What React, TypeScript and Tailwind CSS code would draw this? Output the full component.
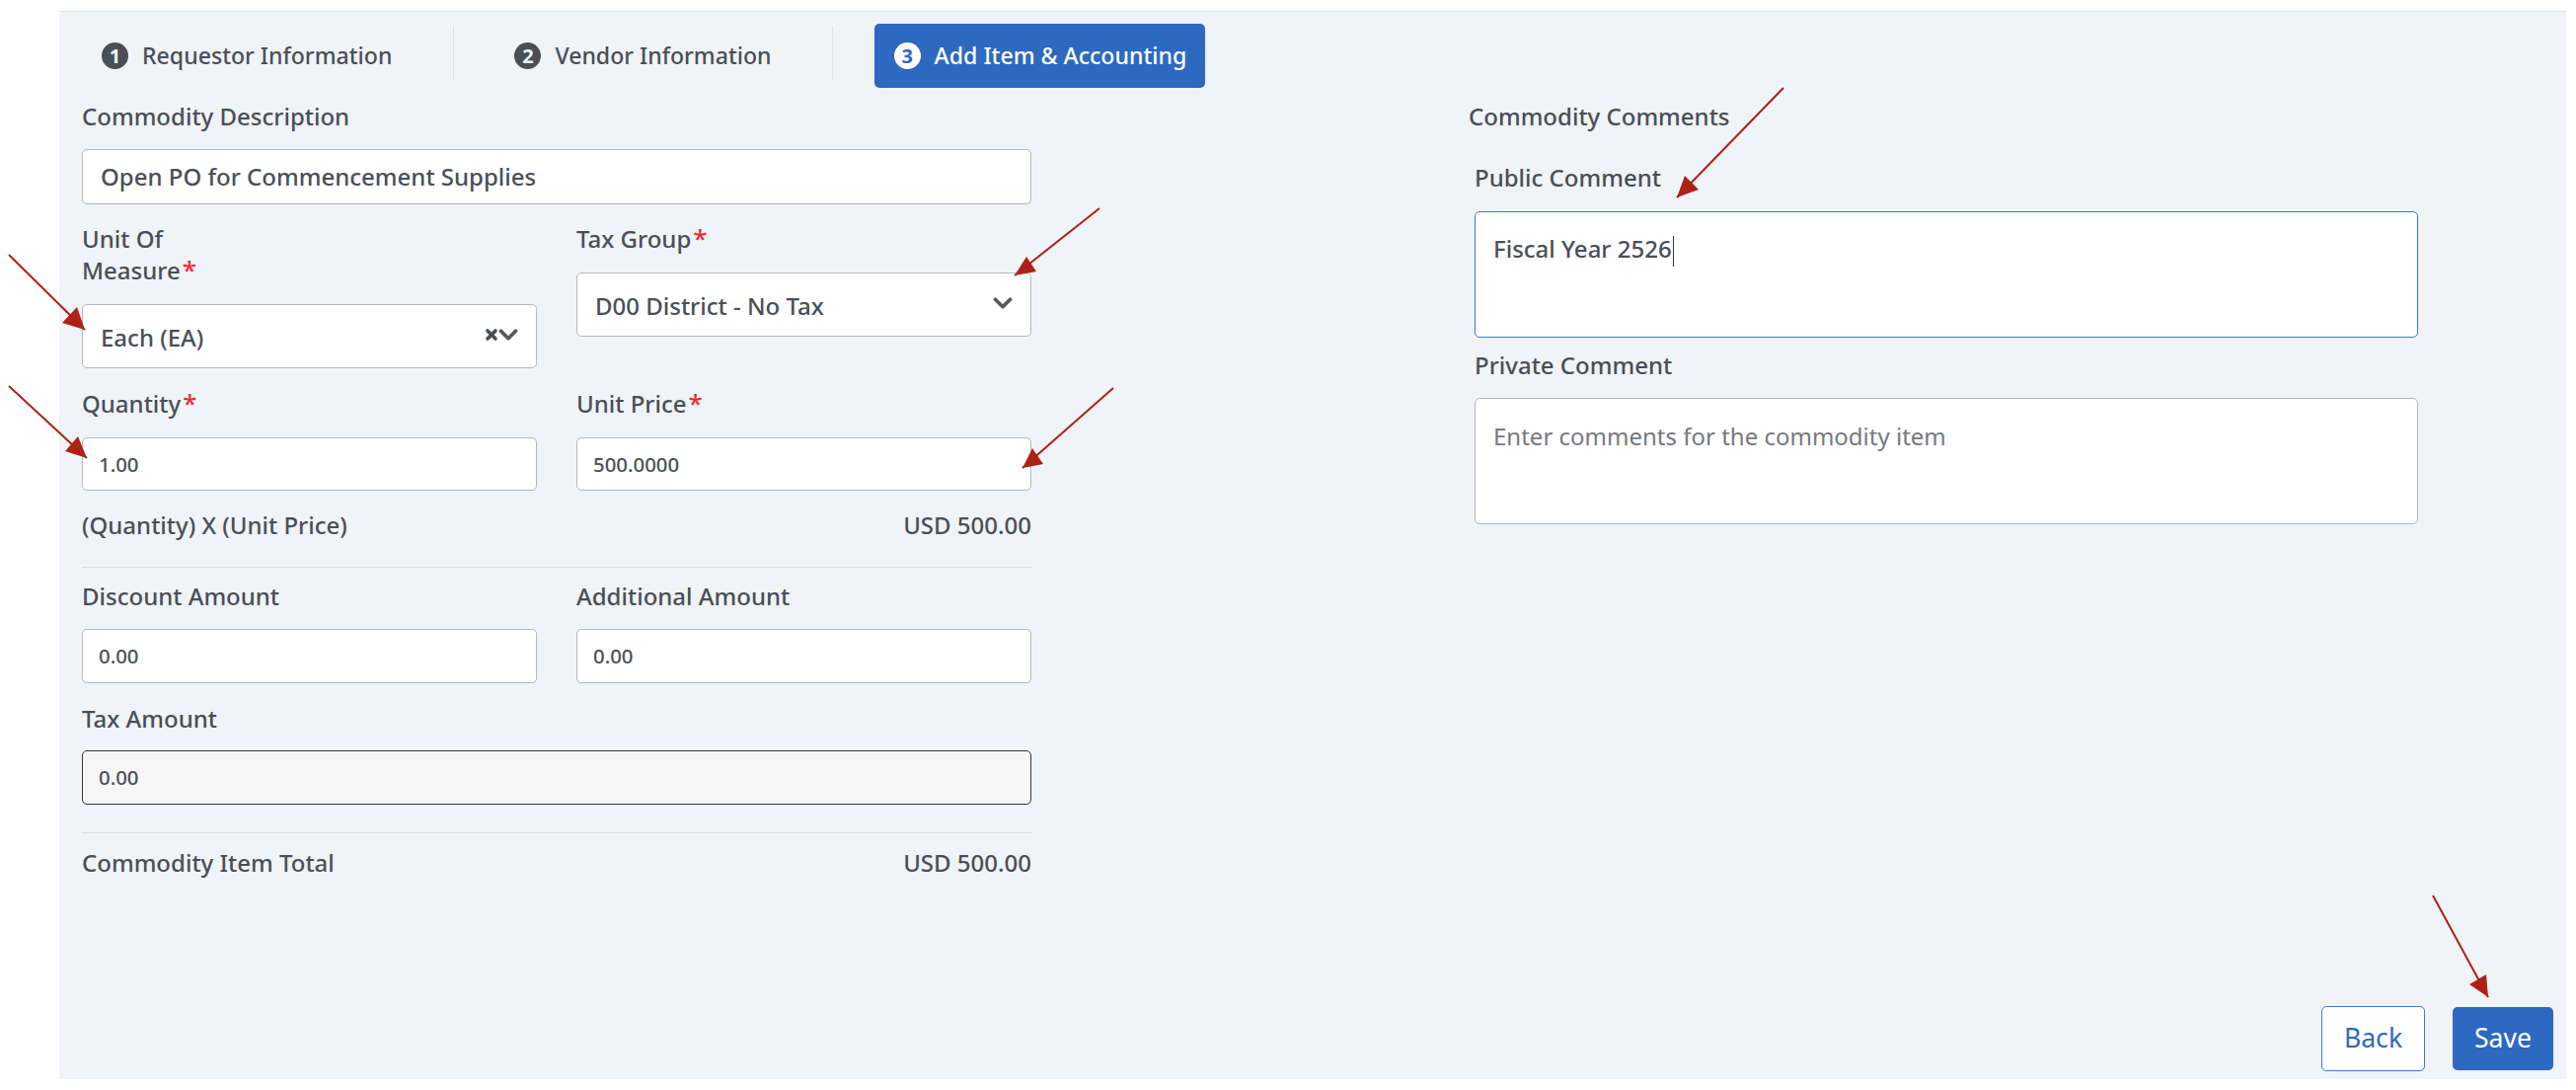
import { ChevronDown, X } from "lucide-react";
import type { ReactNode } from "react";

const arrows = [
  { from: [9, 258], tip: [86, 334], head: "63,327 78,311" },
  { from: [9, 391], tip: [88, 464], head: "66,457 79,442" },
  { from: [1114, 211], tip: [1028, 279], head: "1040,260 1050,275" },
  { from: [1128, 393], tip: [1036, 474], head: "1046,454 1057,470" },
  { from: [1807, 89], tip: [1699, 200], head: "1707,178 1721,192" },
  { from: [2465, 907], tip: [2521, 1010], head: "2502,997 2519,987" },
];

function FieldLabel({ children, required }: { children: ReactNode; required?: boolean }) {
  return (
    <div className="text-[24px] font-medium leading-[32px] text-[#4a4f57]">
      {children}
      {required && <span className="ml-[2px] text-[26px] leading-[0] text-[#f02a2e]">*</span>}
    </div>
  );
}

function Box({ value, className = "" }: { value: string; className?: string }) {
  return (
    <div className={`flex items-center rounded-[5px] border bg-white pl-[16px] font-medium text-[#4a4f57] ${className}`}>
      {value}
    </div>
  );
}

function Select({ value, clearable }: { value: string; clearable?: boolean }) {
  return (
    <div className="mt-[18px] flex h-[65px] items-center justify-between rounded-[5px] border border-[#b4b8bd] bg-white pl-[18px] pr-[13px] text-[24px] font-medium text-[#4a4f57]">
      <span className="pt-[2px]">{value}</span>
      <span className="-mt-[3px] flex items-center">
        {clearable && <X size={16} strokeWidth={5.5} className="-mr-[6px]" />}
        <ChevronDown size={30} strokeWidth={3} className="text-[#55595f]" />
      </span>
    </div>
  );
}

function Step({ n, active }: { n: number; active?: boolean }) {
  return (
    <span
      className={`flex h-[27px] w-[27px] items-center justify-center rounded-full text-[20px] font-bold ${
        active ? "bg-white text-[#2d69c0]" : "bg-[#4a4f57] text-[#eff3f7]"
      }`}
    >
      {n}
    </span>
  );
}

function Tab({ icon, label, className = "" }: { icon: ReactNode; label: string; className?: string }) {
  return (
    <div className={`flex h-[65px] items-center gap-[14px] text-[23.1px] font-medium ${className}`}>
      {icon}
      <span>{label}</span>
    </div>
  );
}

export default function App() {
  return (
    <div className="relative h-[1104px] w-full bg-white pl-[60px] pr-[10px] pt-[11px] font-['Noto_Sans',sans-serif]">
      <div className="flex h-[1082px] flex-col border-t border-[#e2e5e9] bg-[#f0f3f7]">
        <div className="mt-[12px] flex">
          <Tab icon={<Step n={1} />} label="Requestor Information" className="pl-[43px] pr-[62px] text-[#4a4f57]" />
          <div className="my-[2px] h-[55px] w-px bg-[#dcdfe3]" />
          <Tab icon={<Step n={2} />} label="Vendor Information" className="px-[61px] text-[#4a4f57]" />
          <div className="my-[2px] h-[55px] w-px bg-[#dcdfe3]" />
          <Tab
            icon={<Step n={3} active />}
            label="Add Item & Accounting"
            className="ml-[42px] rounded-[5px] bg-[#2d69c0] pl-[20px] pr-[19px] text-white"
          />
        </div>

        <div className="mt-[13px] flex flex-1 pl-[23px]">
          <div className="w-[962px]">
            <FieldLabel>Commodity Description</FieldLabel>
            <Box value="Open PO for Commencement Supplies" className="mt-[17px] h-[56px] border-[#b4b8bd] pl-[18px] text-[24px]" />

            <div className="mt-[19px] grid h-[147px] grid-cols-[461px_461px] gap-x-[40px]">
              <div>
                <FieldLabel required>
                  Unit Of
                  <br />
                  Measure
                </FieldLabel>
                <Select value="Each (EA)" clearable />
              </div>
              <div>
                <FieldLabel required>Tax Group</FieldLabel>
                <Select value="D00 District - No Tax" />
              </div>
            </div>

            <div className="mt-[20px] grid grid-cols-[461px_461px] gap-x-[40px]">
              <div>
                <FieldLabel required>Quantity</FieldLabel>
                <Box value="1.00" className="mt-[18px] h-[54px] border-[#b4b8bd] text-[20.4px]" />
              </div>
              <div>
                <FieldLabel required>Unit Price</FieldLabel>
                <Box value="500.0000" className="mt-[18px] h-[54px] border-[#b4b8bd] text-[20.4px]" />
              </div>
            </div>

            <div className="mt-[19px] flex justify-between">
              <FieldLabel>(Quantity) X (Unit Price)</FieldLabel>
              <FieldLabel>USD 500.00</FieldLabel>
            </div>
            <div className="mt-[26px] h-px bg-[#d9dde2]" />

            <div className="mt-[13px] grid grid-cols-[461px_461px] gap-x-[40px]">
              <div>
                <FieldLabel>Discount Amount</FieldLabel>
                <Box value="0.00" className="mt-[17px] h-[55px] border-[#b4b8bd] text-[20.4px]" />
              </div>
              <div>
                <FieldLabel>Additional Amount</FieldLabel>
                <Box value="0.00" className="mt-[17px] h-[55px] border-[#b4b8bd] text-[20.4px]" />
              </div>
            </div>

            <div className="mt-[20px]">
              <FieldLabel>Tax Amount</FieldLabel>
              <div className="mt-[16px] flex h-[55px] items-center rounded-[5px] border border-[#33363a] bg-[#f6f6f6] pl-[16px] text-[20.4px] font-medium text-[#4a4f57]">
                0.00
              </div>
            </div>
            <div className="mt-[28px] h-px bg-[#d9dde2]" />

            <div className="mt-[14px] flex justify-between">
              <FieldLabel>Commodity Item Total</FieldLabel>
              <FieldLabel>USD 500.00</FieldLabel>
            </div>
          </div>

          <div className="ml-[443px] w-[970px]">
            <FieldLabel>Commodity Comments</FieldLabel>
            <div className="ml-[6px] w-[956px]">
              <div className="mt-[30px]">
                <FieldLabel>Public Comment</FieldLabel>
              </div>
              <div className="mt-[18px] h-[128px] rounded-[5px] border border-[#3a7bd0] bg-white pl-[18px] pt-[21px] text-[24px] font-medium leading-[32px] text-[#4a4f57]">
                Fiscal Year 2526
                <span className="ml-px inline-block h-[31px] w-px bg-[#333] align-middle" />
              </div>
              <div className="mt-[12px]">
                <FieldLabel>Private Comment</FieldLabel>
              </div>
              <div className="mt-[17px] h-[128px] rounded-[5px] border border-[#b4b8bd] bg-white pl-[18px] pt-[22px] text-[24px] leading-[32px] text-[#77797d]">
                Enter comments for the commodity item
              </div>
            </div>
          </div>
        </div>

        <div className="mb-[8px] flex items-center justify-end gap-[28px] pr-[13px] text-[26.6px]">
          <button className="h-[66px] w-[105px] rounded-[5px] border border-[#3a7bd0] bg-white text-[#2d69c0]">Back</button>
          <button className="h-[64px] w-[102px] rounded-[5px] bg-[#2d69c0] text-white">Save</button>
        </div>
      </div>

      <svg className="pointer-events-none absolute left-0 top-0" width={2610} height={1104}>
        {arrows.map((a) => (
          <g key={a.tip.join()} fill="#ad2116" stroke="#ad2116">
            <line x1={a.from[0]} y1={a.from[1]} x2={a.tip[0]} y2={a.tip[1]} strokeWidth={2} />
            <polygon points={`${a.tip[0]},${a.tip[1]} ${a.head}`} strokeWidth={0} />
          </g>
        ))}
      </svg>
    </div>
  );
}
